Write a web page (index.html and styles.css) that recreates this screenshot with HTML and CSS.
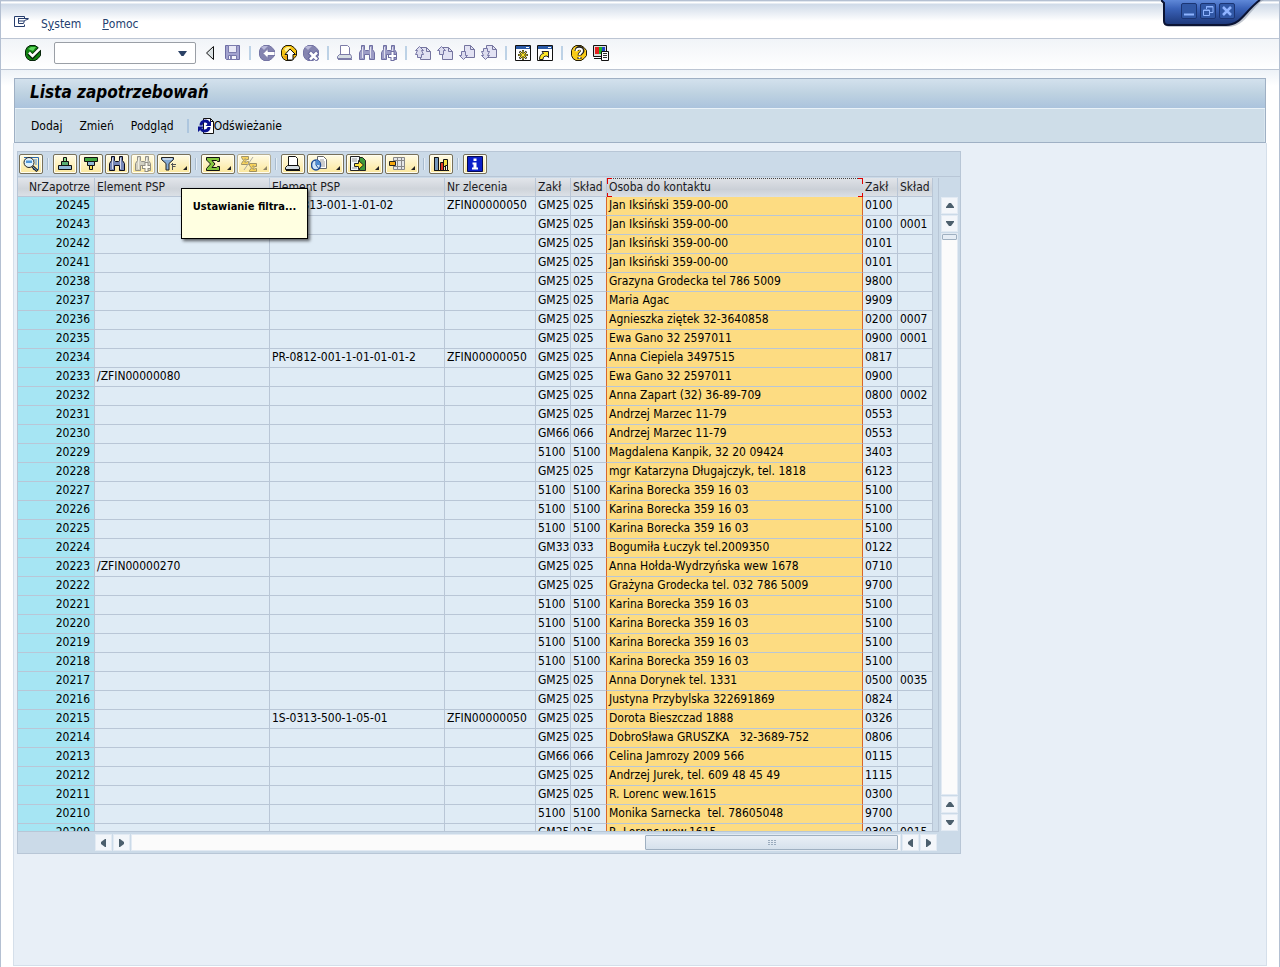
FILE: index.html
```html
<!DOCTYPE html>
<html lang="pl">
<head>
<meta charset="utf-8">
<title>Lista zapotrzebowań</title>
<link rel="stylesheet" href="styles.css">
</head>
<body>
<svg class="symbols" aria-hidden="true">
  <defs>
    <linearGradient id="tab" x1="0" y1="0" x2="0" y2="1"><stop offset="0" stop-color="#5f88d8"/><stop offset=".35" stop-color="#3a62b8"/><stop offset="1" stop-color="#1c3778"/></linearGradient>
    <symbol id="ball" viewBox="0 0 16 16"><path d="M5 .5h5l3 2 2.500 3v5l-2.500 3-3 2h-5l-3-2-1.500-3v-5l1.500-3z"/></symbol>
    <symbol id="binoc" viewBox="0 0 16 16"><path d="M2.500.5h3v4l1 1h3l1-1v-4h3v4l2 3v7h-5v-5h-5v5h-5v-7l2-3z"/><path d="M3.500 2v11M11.500 2v11" fill="none" stroke="#fff" opacity=".7"/></symbol>
    <symbol id="page" viewBox="0 0 16 16"><path d="M5.500 2.500h6l4 4v8h-10z" fill="#e2e2f3" stroke="#74749f"/><path d="M11.500 2.500v4h4" fill="none" stroke="#74749f"/></symbol>
    <symbol id="printer" viewBox="0 0 16 16"><path d="M3.500.5h7l2 2v8h-9z" fill="#fff"/><path d="M2.500 9.500h11l1 2v2h-14v-2z" fill="#d5dde2"/><path d="M1 14.500h14" fill="none"/></symbol>
  </defs>
</svg>
<div class="window">
  <div class="window-tab">
    <svg class="tab-shape" viewBox="0 0 104 30"><path d="M1 0l3 4v19q0 4 5 4h58c12 0 18-9 26-18q6-7 10-9z" fill="#8892a2" opacity=".5"/><path d="M0 0l3 3v18q0 4 4 4h58c12 0 17-9 25-17q6-6 9-8z" fill="url(#tab)"/><path d="M0 0l3 3v18q0 4 4 4h58c12 0 17-9 25-17q6-6 9-8" fill="none" stroke="#0b1434" stroke-width="2"/></svg>
    <div class="window-buttons">
      <button type="button" aria-label="Minimalizuj"><svg viewBox="0 0 14 14"><path d="M2 10.500h10" stroke-width="2"/></svg></button>
      <button type="button" aria-label="Przywróć"><svg viewBox="0 0 14 14"><path d="M2.500 6h6v5.500h-6zM2 6.500h7M5.500 5V2.500h6.500v6H9M5 3h7"/></svg></button>
      <button type="button" aria-label="Zamknij"><svg viewBox="0 0 14 14"><path d="M3 3l8 8M11 3l-8 8" stroke-width="2.500"/></svg></button>
    </div>
  </div>

  <nav class="menubar">
    <button type="button" aria-label="Menu"><svg class="icon" viewBox="0 0 16 16"><path d="M11.500 4.500v-2h-10v10h10v-2M5 4.500h10.500M15.500 5l-4 1.500M5.500 5v4.500h5l1-3M6 7h5" fill="none" stroke="#253c6c"/></svg></button>
    <button type="button">S<u>y</u>stem</button>
    <button type="button"><u>P</u>omoc</button>
  </nav>

  <div class="toolbar">
    <button type="button" class="enter" aria-label="Enter"><svg class="icon" viewBox="0 0 16 16"><use href="#ball" fill="#128212" stroke="#06240a"/><path d="M3 4l3-2 5 0-3 4z" fill="#5cd65c"/><path d="M4 8l3.500 3.500L14.500 4" fill="none" stroke="#06240a" stroke-width="4.500"/><path d="M4 7.500l3.500 3.500L15 3.500" fill="none" stroke="#fff" stroke-width="2.500"/></svg></button>
    <div class="combo"><input type="text" aria-label="Pole poleceń"><button type="button" aria-label="Lista poleceń"><svg viewBox="0 0 9 5"><path d="M0 0h9L5.500 5h-2z" fill="#2b4165"/></svg></button></div>
    <button type="button" class="slim" aria-label="Historia"><svg class="icon" viewBox="0 0 16 16"><path d="M11.500 1.500v13l-7-6.500z" fill="#dce2e4" stroke="#111"/></svg></button>
    <button type="button" aria-label="Zapisz"><svg class="icon" viewBox="0 0 16 16"><path d="M.5.5h14v14h-13l-1-1z" fill="#a3a3cf" stroke="#6d6da4"/><path d="M3.500.5h8v7h-8z" fill="#e9e9f6" stroke="#7c7cae"/><path d="M3.500 10.500h8v4h-8z" fill="#f5f5fc" stroke="#7777aa"/><path d="M5 11h2v3H5z" fill="#8585b4"/></svg></button>
    <i class="sep"></i>
    <button type="button" aria-label="Wstecz"><svg class="icon" viewBox="0 0 16 16"><use href="#ball" fill="#8484b0" stroke="#7474a4"/><path d="M2 2l3-1h4L5 5z" fill="#b8b8d8"/><path d="M4 8.500l5-5V6.500h7v4H9v3z" fill="#fff" stroke="#7777a6"/></svg></button>
    <button type="button" aria-label="Zakończ"><svg class="icon" viewBox="0 0 16 16"><use href="#ball" fill="#f5c313" stroke="#221b06"/><path d="M3 4l3-2h4L5 7z" fill="#fff29c"/><path d="M2 11h12l-3 3H5z" fill="#e99a12"/><path d="M9 4l5.500 5.500H12V15H6.500V9.500H4z" fill="#fff" stroke="#111"/></svg></button>
    <button type="button" aria-label="Anuluj"><svg class="icon" viewBox="0 0 16 16"><use href="#ball" fill="#8484b0" stroke="#7474a4"/><path d="M2 2l3-1h4L5 5z" fill="#b8b8d8"/><path d="M6 7l9 8M15 7l-9 8" stroke="#6868a0" stroke-width="4.500"/><path d="M7 7.500l7 7M14 7.500l-7 7" stroke="#fff" stroke-width="2.500"/></svg></button>
    <i class="sep"></i>
    <button type="button" aria-label="Drukuj"><svg class="icon" viewBox="0 0 16 16"><use href="#printer" stroke="#7c7ca8"/></svg></button>
    <button type="button" aria-label="Szukaj"><svg class="icon" viewBox="0 0 16 16"><use href="#binoc" fill="#9c9cc6" stroke="#6f6fa2"/></svg></button>
    <button type="button" aria-label="Szukaj dalej"><svg class="icon" viewBox="0 0 16 16"><use href="#binoc" fill="#9c9cc6" stroke="#6f6fa2"/><path d="M11.500 6v10M7 11h9" stroke="#6f6fa2" stroke-width="4"/><path d="M11.500 7v8M8 11h7" stroke="#fff" stroke-width="2"/></svg></button>
    <i class="sep"></i>
    <button type="button" aria-label="Pierwsza strona"><svg class="icon" viewBox="0 0 16 16"><use href="#page"/><path d="M.5 5.500l4-4 4 4h-2l2 4h-2v3h-4v-3h-2l2-4z" fill="#dcdcee" stroke="#7777a6"/></svg></button>
    <button type="button" aria-label="Poprzednia strona"><svg class="icon" viewBox="0 0 16 16"><use href="#page"/><path d="M.5 5.500l4-4 4 4h-2v4h-4v-4z" fill="#dcdcee" stroke="#7777a6"/></svg></button>
    <button type="button" aria-label="Następna strona"><svg class="icon" viewBox="0 0 16 16"><use href="#page" y="-2"/><path d="M.5 10.500l4 4 4-4h-2v-4h-4v4z" fill="#dcdcee" stroke="#7777a6"/></svg></button>
    <button type="button" aria-label="Ostatnia strona"><svg class="icon" viewBox="0 0 16 16"><use href="#page" y="-2"/><path d="M.5 10.500l4 4 4-4h-2l2-4h-2v-3h-4v3h-2l2 4z" fill="#dcdcee" stroke="#7777a6"/></svg></button>
    <i class="sep"></i>
    <button type="button" aria-label="Nowa sesja"><svg class="icon" viewBox="0 0 16 16"><path d="M.5.5h15v15H.5z" fill="#fff" stroke="#111"/><path d="M1 1h14v3H1z" fill="#2a5aa6"/><path d="M11 2.500h3" stroke="#fff"/><path d="M8 5v10M3 10h10M4.500 6.500l7 7M11.500 6.500l-7 7" stroke="#222" stroke-width="2"/><path d="M8 5.500v9M3.500 10h9M5 7l6 6M11 7l-6 6" stroke="#ffe727"/></svg></button>
    <button type="button" aria-label="Skrót"><svg class="icon" viewBox="0 0 16 16"><path d="M.5.5h15v15H.5z" fill="#fff" stroke="#111"/><path d="M1 1h14v3H1z" fill="#2a5aa6"/><path d="M11 2.500h3" stroke="#fff"/><path d="M2.500 14.500c0-4 2-6 4-6L5 6.500h6.500v6L10 11c-3 0-4 1-4 3.500z" fill="#ffe727" stroke="#222"/></svg></button>
    <i class="sep"></i>
    <button type="button" aria-label="Pomoc"><svg class="icon" viewBox="0 0 16 16"><use href="#ball" fill="#f9cb16" stroke="#221b06"/><path d="M3 4l3-2h4L5 7z" fill="#fff29c"/><path d="M5.500 6c0-4 6-4 6 0 0 2-3 2-3 4.500M8.500 12v2" fill="none" stroke="#222" stroke-width="4"/><path d="M5.500 6c0-3 5.500-3 5.500 0 0 2-2.500 2-2.500 4M8.500 12v1.500" fill="none" stroke="#fff" stroke-width="2"/></svg></button>
    <button type="button" aria-label="Układ"><svg class="icon" viewBox="0 0 16 16"><path d="M.5.500h13v11H.5z" fill="#ddd" stroke="#111"/><path d="M2 2h4v7H2z" fill="#e42020"/><path d="M6 2h3v7H6z" fill="#17b52a"/><path d="M9 2h3v7H9z" fill="#2044c8"/><path d="M1 13.500h9" stroke="#111"/><path d="M8.500 6.500h7v9h-7z" fill="#fff" stroke="#111"/><path d="M10 8.500h4M10 10.500h4M10 12.500h4" stroke="#333"/></svg></button>
  </div>

  <main class="workspace">
    <header class="panel-head">
      <h1>Lista zapotrzebowań</h1>
      <div class="actions">
        <button type="button">Dodaj</button>
        <button type="button">Zmień</button>
        <button type="button">Podgląd</button>
        <i class="sep"></i>
        <button type="button" class="refresh"><svg class="icon" viewBox="0 0 16 16"><path d="M5.500.5h7l3 3v12h-10z" fill="#fff" stroke="#111"/><path d="M12.500.5v3h3" fill="none" stroke="#111"/><path d="M3 7.500c0-5 6-6 8-2M11 9c0 4.500-6 5-8 2" fill="none" stroke="#0b1290" stroke-width="3"/><path d="M13 2.500v5.500H7.500zM0 14V8.500h6z" fill="#0b1290"/></svg>Odświeżanie</button>
      </div>
    </header>

    <section class="content">
      <div class="grid">
        <div class="grid-tools">
          <button type="button" aria-label="Szczegóły"><svg class="icon" viewBox="0 0 16 16"><path d="M1 1.500h14.500v12H10" fill="none" stroke="#2a67ad"/><path d="M11 4h3M12 6h2M12 8h2" stroke="#4a8ad0"/><circle cx="6" cy="6.500" r="5" fill="#dff1fc" stroke="#222"/><path d="M3 4.500h6v2.500H3z" fill="#4f96d8"/><path d="M9.500 10.500l5 4.500" stroke="#222" stroke-width="3"/><path d="M10 11l4 3.500" stroke="#79aee0"/></svg></button>
          <i class="sep"></i>
          <button type="button" aria-label="Sortuj rosnąco"><svg class="icon" viewBox="0 0 16 16"><path d="M6.500 1.500h3v4h-3z" fill="#8fe08f" stroke="#111"/><path d="M4.500 5.500h7v4h-7z" fill="#58ad72" stroke="#111"/><path d="M1.500 9.500h13v4h-13z" fill="#91b8d8" stroke="#111"/></svg></button>
          <button type="button" aria-label="Sortuj malejąco"><svg class="icon" viewBox="0 0 16 16"><path d="M1.500 1.500h13v4h-13z" fill="#41a53f" stroke="#111"/><path d="M4.500 5.500h7v4h-7z" fill="#91b8d8" stroke="#111"/><path d="M6.500 9.500h3v4h-3z" fill="#f6df55" stroke="#111"/></svg></button>
          <button type="button" aria-label="Szukaj w liście"><svg class="icon" viewBox="0 0 16 16"><use href="#binoc" fill="#7788b7" stroke="#0c0c1a"/></svg></button>
          <button type="button" class="off" aria-label="Szukaj następnego"><svg class="icon" viewBox="0 0 16 16"><use href="#binoc" fill="#c7c8c3" stroke="#777"/><path d="M11.500 6v10M7 11h9" stroke="#777" stroke-width="4"/><path d="M11.500 7v8M8 11h7" stroke="#fff" stroke-width="2"/></svg></button>
          <button type="button" class="menu" aria-label="Ustawianie filtra" aria-describedby="tip"><svg class="icon" viewBox="0 0 16 16"><path d="M.5 1.500h12v2l-4.500 4v6.500H5V7.500l-4.500-4z" fill="#86acd5" stroke="#222"/><path d="M2 3h9" stroke="#fff"/><path d="M10 8.500h5M11.500 7v7M11.500 10.500h3" stroke="#555" fill="none"/></svg></button>
          <i class="sep"></i>
          <button type="button" class="menu" aria-label="Suma"><svg class="icon" viewBox="0 0 16 16"><path d="M1.500 1.500h13v4h-2l-1-1H7L10 8l-3 3.500h4.500l1-1h2v4h-13v-2L5.500 8l-4-4z" fill="#84c63c" stroke="#111"/></svg></button>
          <button type="button" class="menu off" aria-label="Suma pośrednia"><svg class="icon" viewBox="0 0 16 16"><path d="M.5.500h7v3h-2L4.500 3h-1l1.500 1.500L3.500 6h2l1-.5h1v3h-7v-1l2-3-2-3z" fill="#f6cb43" stroke="#887b4f"/><path d="M8.500 7.500h7v3h-2l-1-.5h-1l1.500 1.500-1.500 1.500h2l1-.5h1v3h-7v-1l2-2.500-2-2.500z" fill="#f6cb43" stroke="#887b4f"/><path d="M12 1L3 14" stroke="#999"/></svg></button>
          <i class="sep"></i>
          <button type="button" aria-label="Drukuj listę"><svg class="icon" viewBox="0 0 16 16"><use href="#printer" stroke="#111"/></svg></button>
          <button type="button" class="menu wide" aria-label="Widoki"><svg class="icon" viewBox="0 0 16 16"><path d="M6.500.5h6l3 3v9h-9z" fill="#fff" stroke="#666"/><path d="M9 4h4M9 6h5M9 8h5M9 10h5" stroke="#999"/><ellipse cx="5" cy="9" rx="4.500" ry="5" fill="#cfe6f8" stroke="#1f4d96" stroke-width="1.500"/><path d="M5 4v5L8 13" fill="none" stroke="#1f4d96"/><path d="M5 9V4q4 0 4 5z" fill="#4c8bd0"/></svg></button>
          <button type="button" class="menu wide" aria-label="Eksport"><svg class="icon" viewBox="0 0 16 16"><path d="M9.500 1.500h3l3 3v10h-6z" fill="#3f9a3a" stroke="#222"/><path d="M.5.5h9v14h-9z" fill="#f3f6f8" stroke="#222"/><path d="M2 3h5M2 5h5M2 12h5" stroke="#999"/><path d="M4.500 7.500h4v-3l5 4.500-5 4.500v-3h-4z" fill="#ffe33a" stroke="#222"/></svg></button>
          <button type="button" class="menu" aria-label="Układ listy"><svg class="icon" viewBox="0 0 16 16"><path d="M4.500 1.500h11v12h-11zM8.500 1.500v12M12.500 1.500v12M4.500 4.500h11M4.500 10.500h11" fill="#e4e6e8" stroke="#888"/><path d="M.5 5.500h6v4h-6z" fill="#f7a80e" stroke="#222"/></svg></button>
          <i class="sep"></i>
          <button type="button" aria-label="Wykres"><svg class="icon" viewBox="0 0 16 16"><path d="M1.500 1v13.500H16" fill="none" stroke="#111"/><path d="M1.500 1.500h4v13h-4z" fill="#7598bd" stroke="#111"/><path d="M7.500 6.500h3v8h-3z" fill="#e23522" stroke="#111"/><path d="M10.500 3.500h4v7h-4z" fill="#f4df43" stroke="#111"/><path d="M12.500 9.500h2v5h-2z" fill="#eee" stroke="#111"/></svg></button>
          <i class="sep"></i>
          <button type="button" aria-label="Informacja"><svg class="icon" viewBox="0 0 16 16"><path d="M.5.500h15v15H.5z" fill="#0c1fc8" stroke="#050a50"/><path d="M6.500 2.500h3v2.500h-3zM5.500 6.500h4v5h1.500v2h-6v-2h1.500v-3h-1z" fill="#fff"/></svg></button>
          <div class="tooltip" role="tooltip" id="tip">Ustawianie filtra...</div>
        </div>

        <div class="grid-body">
          <div class="viewport">
            <table>
              <colgroup><col class="c-id"><col class="c-psp"><col class="c-psp"><col class="c-order"><col class="c-code"><col class="c-store"><col class="c-person"><col class="c-code"><col class="c-code"></colgroup>
              <thead><tr><th>NrZapotrze</th><th>Element PSP</th><th>Element PSP</th><th>Nr zlecenia</th><th>Zakł</th><th>Skład</th><th class="active">Osoba do kontaktu</th><th>Zakł</th><th>Skład</th></tr></thead>
              <tbody id="rows"></tbody>
            </table>
          </div>
          <div class="vscroll">
            <button type="button" aria-label="W górę"><svg viewBox="0 0 8 5"><path d="M0 5h8V4L5 0H3L0 4z"/></svg></button>
            <button type="button" aria-label="W dół"><svg viewBox="0 0 8 5"><path d="M0 0h8v1L5 5H3L0 1z"/></svg></button>
            <div class="track"><div class="thumb"></div></div>
            <button type="button" aria-label="Do góry"><svg viewBox="0 0 8 5"><path d="M0 5h8V4L5 0H3L0 4z"/></svg></button>
            <button type="button" aria-label="Na dół"><svg viewBox="0 0 8 5"><path d="M0 0h8v1L5 5H3L0 1z"/></svg></button>
          </div>
        </div>
        <div class="hscroll">
          <button type="button" aria-label="W lewo"><svg viewBox="0 0 5 8"><path d="M5 0v8H4L0 5V3l4-3z"/></svg></button>
          <button type="button" aria-label="W prawo"><svg viewBox="0 0 5 8"><path d="M0 0v8h1l4-3V3L1 0z"/></svg></button>
          <div class="track"><div class="thumb"><svg viewBox="0 0 8 5"><path d="M0 0h2v1H0zM3 0h2v1H3zM6 0h2v1H6zM0 2h2v1H0zM3 2h2v1H3zM6 2h2v1H6zM0 4h2v1H0zM3 4h2v1H3zM6 4h2v1H6z"/></svg></div></div>
          <button type="button" aria-label="Na początek"><svg viewBox="0 0 5 8"><path d="M5 0v8H4L0 5V3l4-3z"/></svg></button>
          <button type="button" aria-label="Na koniec"><svg viewBox="0 0 5 8"><path d="M0 0v8h1l4-3V3L1 0z"/></svg></button>
        </div>
      </div>
    </section>
  </main>
</div>
<script src="rows.js"></script>
</body>
</html>
```
FILE: rows.js
```js
// number | PSP element | PSP element | order | plant | store | contact | plant | store
const data = `20245||MW-0813-001-1-01-02|ZFIN00000050|GM25|025|Jan Iksiński 359-00-00|0100|
20243||||GM25|025|Jan Iksiński 359-00-00|0100|0001
20242||||GM25|025|Jan Iksiński 359-00-00|0101|
20241||||GM25|025|Jan Iksiński 359-00-00|0101|
20238||||GM25|025|Grazyna Grodecka tel 786 5009|9800|
20237||||GM25|025|Maria Agac|9909|
20236||||GM25|025|Agnieszka ziętek 32-3640858|0200|0007
20235||||GM25|025|Ewa Gano 32 2597011|0900|0001
20234||PR-0812-001-1-01-01-01-2|ZFIN00000050|GM25|025|Anna Ciepiela 3497515|0817|
20233|/ZFIN00000080|||GM25|025|Ewa Gano 32 2597011|0900|
20232||||GM25|025|Anna Zapart (32) 36-89-709|0800|0002
20231||||GM25|025|Andrzej Marzec 11-79|0553|
20230||||GM66|066|Andrzej Marzec 11-79|0553|
20229||||5100|5100|Magdalena Kanpik, 32 20 09424|3403|
20228||||GM25|025|mgr Katarzyna Długajczyk, tel. 1818|6123|
20227||||5100|5100|Karina Borecka 359 16 03|5100|
20226||||5100|5100|Karina Borecka 359 16 03|5100|
20225||||5100|5100|Karina Borecka 359 16 03|5100|
20224||||GM33|033|Bogumiła Łuczyk tel.2009350|0122|
20223|/ZFIN00000270|||GM25|025|Anna Hołda-Wydrzyńska wew 1678|0710|
20222||||GM25|025|Grażyna Grodecka tel. 032 786 5009|9700|
20221||||5100|5100|Karina Borecka 359 16 03|5100|
20220||||5100|5100|Karina Borecka 359 16 03|5100|
20219||||5100|5100|Karina Borecka 359 16 03|5100|
20218||||5100|5100|Karina Borecka 359 16 03|5100|
20217||||GM25|025|Anna Dorynek tel. 1331|0500|0035
20216||||GM25|025|Justyna Przybylska 322691869|0824|
20215||1S-0313-500-1-05-01|ZFIN00000050|GM25|025|Dorota Bieszczad 1888|0326|
20214||||GM25|025|DobroSława GRUSZKA   32-3689-752|0806|
20213||||GM66|066|Celina Jamrozy 2009 566|0115|
20212||||GM25|025|Andrzej Jurek, tel. 609 48 45 49|1115|
20211||||GM25|025|R. Lorenc wew.1615|0300|
20210||||5100|5100|Monika Sarnecka  tel. 78605048|9700|
20209||||GM25|025|R. Lorenc wew.1615|0300|0015`;

const body = document.getElementById("rows");
for (const line of data.split("\n")) {
  const row = body.insertRow();
  for (const value of line.split("|")) row.insertCell().textContent = value;
}
```
FILE: styles.css
```css
* { box-sizing: border-box; }
body { margin: 0; font: 12px/18px "DejaVu Sans Condensed", "DejaVu Sans", Tahoma, sans-serif; color: #000; }
button { border: 0; padding: 0; margin: 0; background: none; font: inherit; color: inherit; display: flex; align-items: center; flex: none; }
svg { display: block; }
.symbols { position: absolute; width: 0; height: 0; }
.icon { width: 16px; height: 16px; flex: none; }

.window { position: relative; display: flex; flex-direction: column; min-height: 100vh; border: 1px solid #b4c0d2; border-width: 1px 1px 0; background: #fff; }
.window-tab { position: absolute; top: -1px; right: 14px; width: 104px; height: 30px; }
.tab-shape { width: 104px; height: 30px; }
.window-buttons { position: absolute; top: 3px; left: 20px; display: flex; gap: 3px; }
.window-buttons button { width: 16px; height: 16px; border: 1px solid #1b3574; border-radius: 2px; background: #3158a6; }
.window-buttons svg { width: 14px; height: 14px; fill: none; stroke: #8fb4ff; }

.menubar { display: flex; align-items: center; gap: 21px; height: 38px; padding: 8px 12px 0; border-bottom: 1px solid #bcc5d3; color: #24406f; background: linear-gradient(#c5d1e0 0, #fff 1px, #fff 2px, #cfdae8 3px, #fff 20px); }
.menubar button:first-child { margin-right: -9px; padding-bottom: 4px; }

.toolbar { display: flex; align-items: center; gap: 6px; height: 31px; padding: 0 24px 2px; border-bottom: 1px solid #bcc5d3; background: linear-gradient(#f1f4f8, #fff); }
.enter { margin-right: 7px; }
.slim { margin-right: 1px; }
.combo { display: flex; width: 142px; height: 22px; border: 1px solid #9a9fa6; border-radius: 2px; background: #fff; }
.combo input { flex: 1; min-width: 0; border: 0; padding: 0 3px; background: none; font: inherit; }
.combo button { width: 17px; }
.combo svg { width: 9px; height: 5px; }
.toolbar .sep { width: 2px; height: 14px; margin: 0 2px; background: #bdd2e6; }

.workspace { display: flex; flex-direction: column; flex: 1; padding: 8px 12px 1px; background: linear-gradient(#edf2f7, #fff 16px); }
.panel-head { margin: 0 1px; border: 1px solid #9fb0c4; background: #cedde8; }
h1 { margin: 0; padding: 2px 15px 5px; border-bottom: 1px solid #eaf2f8; font: italic bold 17px/22px "DejaVu Sans Condensed", "DejaVu Sans", Tahoma, sans-serif; background: linear-gradient(#d3e1ed, #bed2e1 50%, #abc3dd); }
.actions { display: flex; align-items: center; gap: 17px; height: 33px; padding: 0 15px; border: 1px solid #d9e6ef; border-width: 0 1px; }
.actions .sep { width: 2px; height: 14px; margin: 0 -8px 0 -4px; background: #adc6de; }

.content { flex: 1; padding: 8px 3px; border: 1px solid #d5dfea; border-top: 0; background: #e8eff7; }
.grid { width: fit-content; border: 1px solid #b8c6d6; background: #cbdae8; }
.grid-tools { position: relative; display: flex; align-items: center; gap: 2px; height: 25px; padding: 0 1px; border-bottom: 1px solid #b8c6d6; }
.grid-tools button { width: 24px; height: 20px; padding: 0 3px; border: 1px solid #77705a; border-radius: 2px; background: linear-gradient(#fffbe4, #fbe79c); box-shadow: inset 0 0 0 1px #fffdf0; }
.grid-tools .menu { width: 34px; }
.grid-tools .wide { width: 37px; }
.grid-tools .menu::after { content: ""; margin: 8px 0 0 auto; border: 2px solid #222; border-top-color: transparent; border-left-color: transparent; }
.grid-tools .off { border-color: #b5ae95; }
.grid-tools .off .icon { opacity: .8; }
.grid-tools .off::after { opacity: .5; }
.grid-tools .sep { width: 2px; height: 12px; margin: 0 2px; border-left: 1px solid #a9bccf; background: #e5edf5; }
.tooltip { position: absolute; z-index: 1; left: 163px; top: 36px; width: 127px; height: 51px; padding-top: 9px; border: 1px solid #000; background: #ffffe1; box-shadow: 2px 2px 3px #0009; font-size: 11px; font-weight: bold; text-align: center; }

.grid-body { display: flex; gap: 1px; padding-top: 1px; }
.viewport { width: 921px; height: 654px; overflow: hidden; border-right: 1px solid #b8c6d6; border-bottom: 1px solid #b8c6d6; }
table { table-layout: fixed; width: 915px; border-collapse: separate; border-spacing: 0; white-space: pre; }
.c-id { width: 77px; }
.c-psp { width: 175px; }
.c-order { width: 91px; }
.c-code { width: 35px; }
.c-store { width: 36px; }
.c-person { width: 256px; }
th, td { height: 19px; padding: 0 0 0 2px; overflow: hidden; text-align: left; line-height: 16px; border: solid #b9c6d6; border-width: 0 1px 1px 0; }
th { padding-top: 1px; font-weight: normal; line-height: 17px; color: #1a1a22; background: linear-gradient(#e2e5ea, #cfd4da 60%, #dbe0e6); }
td { background: #dfebf5; vertical-align: top; }
th:first-child, td:first-child { padding-right: 4px; text-align: right; }
td:first-child { background: #a6e5f3; }
td:nth-child(6) { border-right-color: #d8662c; }
td:nth-child(7) { background: #fddc82; border-right-color: #d8662c; }
th.active {
  --red: linear-gradient(#e00000, #e00000);
  padding-left: 2px;
  border-color: transparent;
  background:
    var(--red) 0 0 / 5px 1px no-repeat, var(--red) 0 0 / 1px 6px no-repeat,
    var(--red) 0 100% / 5px 1px no-repeat, var(--red) 0 100% / 1px 4px no-repeat,
    var(--red) 100% 0 / 5px 1px no-repeat, var(--red) 100% 0 / 1px 6px no-repeat,
    var(--red) 100% 100% / 5px 1px no-repeat, var(--red) 100% 100% / 1px 4px no-repeat,
    repeating-linear-gradient(90deg, #444 0 1px, #e2e5ea 1px 2px) 0 0 / 100% 1px no-repeat,
    linear-gradient(#dfe2e7, #cbd0d7 60%, #dbe0e6);
  background-origin: border-box;
}

.vscroll { display: flex; flex-direction: column; gap: 1px; width: 20px; padding: 19px 2px 1px 1px; }
.vscroll button, .hscroll button { width: 17px; height: 17px; justify-content: center; background: #f3f6fa; border: 1px solid #e2eaf3; }
.vscroll button svg { width: 8px; height: 5px; fill: #4c5f6d; }
.hscroll button svg { width: 5px; height: 8px; fill: #4c5f6d; }
.track { flex: 1; border: 1px solid #e2eaf3; background: #fbfbfb; }
.vscroll .thumb { height: 6px; border: 1px solid #9fb0c1; border-radius: 1px; background: #e6edf5; }
.hscroll { display: flex; gap: 1px; padding: 2px 23px 2px 77px; }
.hscroll .track { display: flex; justify-content: flex-end; padding-right: 2px; }
.hscroll .thumb { display: flex; align-items: center; justify-content: center; width: 33%; border: 1px solid #9fb0c1; border-radius: 1px; background: linear-gradient(#e9eff6, #d6e1ec); }
.hscroll .thumb svg { width: 8px; height: 5px; fill: #9aabbd; }
```
